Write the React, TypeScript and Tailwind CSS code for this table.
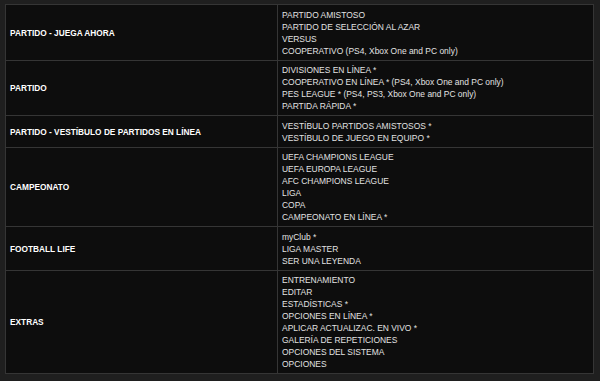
const rows: { mode: string; items: string[] }[] = [
  {
    mode: 'PARTIDO - JUEGA AHORA',
    items: [
      'PARTIDO AMISTOSO',
      'PARTIDO DE SELECCIÓN AL AZAR',
      'VERSUS',
      'COOPERATIVO (PS4, Xbox One and PC only)',
    ],
  },
  {
    mode: 'PARTIDO',
    items: [
      'DIVISIONES EN LÍNEA *',
      'COOPERATIVO EN LÍNEA * (PS4, Xbox One and PC only)',
      'PES LEAGUE * (PS4, PS3, Xbox One and PC only)',
      'PARTIDA RÁPIDA *',
    ],
  },
  {
    mode: 'PARTIDO - VESTÍBULO DE PARTIDOS EN LÍNEA',
    items: ['VESTÍBULO PARTIDOS AMISTOSOS *', 'VESTÍBULO DE JUEGO EN EQUIPO *'],
  },
  {
    mode: 'CAMPEONATO',
    items: [
      'UEFA CHAMPIONS LEAGUE',
      'UEFA EUROPA LEAGUE',
      'AFC CHAMPIONS LEAGUE',
      'LIGA',
      'COPA',
      'CAMPEONATO EN LÍNEA *',
    ],
  },
  {
    mode: 'FOOTBALL LIFE',
    items: ['myClub *', 'LIGA MASTER', 'SER UNA LEYENDA'],
  },
  {
    mode: 'EXTRAS',
    items: [
      'ENTRENAMIENTO',
      'EDITAR',
      'ESTADÍSTICAS *',
      'OPCIONES EN LÍNEA *',
      'APLICAR ACTUALIZAC. EN VIVO *',
      'GALERÍA DE REPETICIONES',
      'OPCIONES DEL SISTEMA',
      'OPCIONES',
    ],
  },
]

export default function App() {
  return (
    <div
      className="w-[600px] h-[381px] bg-[#1f1f1f] pt-[4px] pl-[5px] overflow-hidden"
      style={{ fontFamily: '"Liberation Sans", Arial, sans-serif' }}
    >
      <table className="w-[589px] border-collapse border border-[#444] bg-[#0d0d0d] leading-[12px]">
        <tbody>
          {rows.map((row) => (
            <tr key={row.mode}>
              <td className="w-[272px] border border-[#353535] px-[4px] pt-[3.5px] pb-[3px] align-middle text-[8.3px] font-bold text-white">
                {row.mode}
              </td>
              <td className="border border-[#353535] px-[4px] pt-[3.5px] pb-[3px] align-top text-[8.45px] text-[#e2e2e2]">
                {row.items.map((item) => (
                  <div key={item}>{item}</div>
                ))}
              </td>
            </tr>
          ))}
        </tbody>
      </table>
    </div>
  )
}
